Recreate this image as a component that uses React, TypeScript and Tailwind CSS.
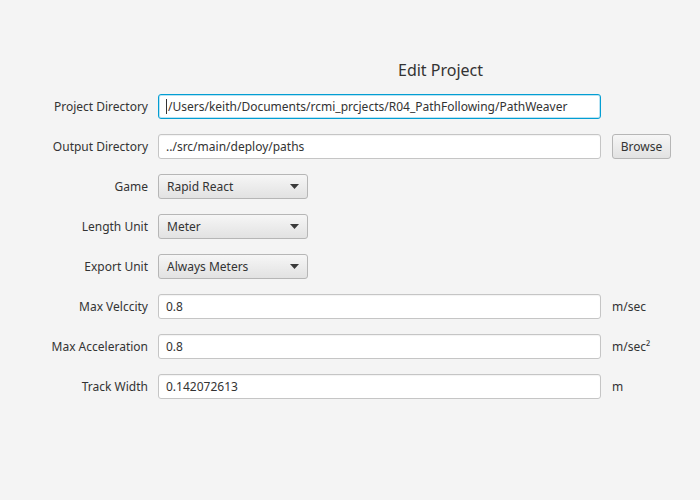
const font = { fontFamily: '"Noto Sans", "Liberation Sans", Arial, sans-serif' };

function Label({ children }: { children: React.ReactNode }) {
  return <div className="text-right text-[12px] text-[#333333] leading-[25px] h-[25px]">{children}</div>;
}

function TextField({ value, focused }: { value: string; focused?: boolean }) {
  return (
    <div
      className={
        focused
          ? "h-[25px] bg-white rounded-[3px] border border-[#039ed3] shadow-[inset_0_0_0_1px_#b9e3f3] px-[7px] text-[12px] leading-[23px] text-[#333333] whitespace-nowrap overflow-hidden flex items-center"
          : "h-[25px] bg-white rounded-[3px] border border-[#c5c5c5] shadow-[inset_0_1px_1px_rgba(0,0,0,0.05)] px-[7px] text-[12px] leading-[23px] text-[#333333] whitespace-nowrap overflow-hidden"
      }
    >
      {focused && <span className="w-px h-[15px] bg-[#333333] mr-[1px]" />}
      {value}
    </div>
  );
}

function Combo({ value }: { value: string }) {
  return (
    <div className="w-[150px] h-[25px] rounded-[3px] border border-[#b6b6b6] bg-gradient-to-b from-[#f6f6f6] to-[#e2e2e2] flex items-center justify-between pl-[8px] pr-[8px] text-[12px] text-[#333333]">
      <span>{value}</span>
      <svg width="9" height="5" viewBox="0 0 9 5">
        <path d="M0 0 H9 L4.5 5 Z" fill="#3a3a3a" />
      </svg>
    </div>
  );
}

function Unit({ children }: { children: React.ReactNode }) {
  return <div className="pl-[1px] text-[12px] leading-[25px] text-[#333333]">{children}</div>;
}

export default function App() {
  return (
    <div className="w-[700px] h-[500px] bg-[#f4f4f4]" style={font}>
      <div className="pt-[59px] pl-[398px] h-[94px] text-[16px] leading-[22px] text-[#333333]">Edit Project</div>
      <div className="grid grid-cols-[148px_443px_1fr] gap-x-[10px] gap-y-[15px] items-center">
        <Label>Project Directory</Label>
        <TextField value="/Users/keith/Documents/rcmi_prcjects/R04_PathFollowing/PathWeaver" focused />
        <div />

        <Label>Output Directory</Label>
        <TextField value="../src/main/deploy/paths" />
        <div className="pl-[1px]">
          <div className="w-[59px] h-[25px] rounded-[3px] border border-[#b6b6b6] bg-gradient-to-b from-[#f6f6f6] to-[#e2e2e2] text-[12px] text-[#333333] flex items-center justify-center">
            Browse
          </div>
        </div>

        <Label>Game</Label>
        <Combo value="Rapid React" />
        <div />

        <Label>Length Unit</Label>
        <Combo value="Meter" />
        <div />

        <Label>Export Unit</Label>
        <Combo value="Always Meters" />
        <div />

        <Label>Max Velccity</Label>
        <TextField value="0.8" />
        <Unit>m/sec</Unit>

        <Label>Max Acceleration</Label>
        <TextField value="0.8" />
        <Unit>m/sec²</Unit>

        <Label>Track Width</Label>
        <TextField value="0.142072613" />
        <Unit>m</Unit>
      </div>
    </div>
  );
}
